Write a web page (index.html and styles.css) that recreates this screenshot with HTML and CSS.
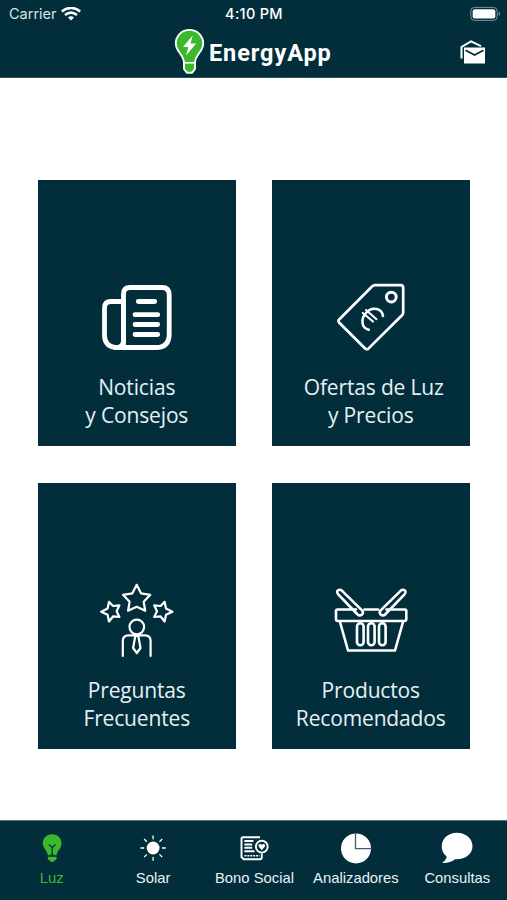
FILE: index.html
```html
<!DOCTYPE html>
<html lang="es">
<head>
<meta charset="utf-8">
<meta name="viewport" content="width=device-width, initial-scale=1">
<title>EnergyApp</title>
<link rel="stylesheet" href="styles.css">
</head>
<body>
<div class="app">
  <header class="header">
    <div class="status">
      <div class="carrier"><span class="carrier-name">Carrier</span>
        <svg class="wifi" width="20" height="14" viewBox="61 6 20 14" fill="none" stroke="#fff" stroke-width="2.6"><path d="M61.8 10.6Q71 3.2 80.2 10.6"/><path d="M65 14Q71 9.4 77 14"/><path d="M68 16.4Q71 14 74 16.4L71 19.6Z" fill="#fff" stroke="none"/></svg>
      </div>
      <span class="time">4:10 PM</span>
      <svg class="battery" width="32" height="16" viewBox="470 5 32 16"><rect x="470.8" y="6.4" width="26.4" height="13" rx="3.8" fill="none" stroke="#7d929c" stroke-width="1"/><rect x="472.7" y="8.3" width="22.6" height="9.2" rx="2" fill="#fff"/><path d="M498.7 10.8Q501.6 12.9 498.7 15Z" fill="#7d929c"/></svg>
    </div>
    <div class="titlebar">
      <div class="brand">
        <svg class="logo" width="32" height="48" viewBox="173 28 32 48"><path d="M189.5 29.9C181.7 29.9 175.8 35.9 175.8 43.4C175.8 52 184 54.5 184 63V69L187 72.8H192L195 69V63C195 54.5 203.2 52 203.2 43.4C203.2 35.9 197.3 29.9 189.5 29.9Z" fill="#3db82c" stroke="#fff" stroke-width="1.9" stroke-linejoin="round"/><path d="M184 62.8H195" stroke="#fff" stroke-width="1.6"/><path d="M192.7 35.5L183 47H188.4L186 55.5L196.2 43.5H190.5Z" fill="#fff"/></svg>
        <h1 class="name">EnergyApp</h1>
      </div>
      <svg class="mail" width="28" height="26" viewBox="459 39 28 26"><path d="M461.5 58.5V47L471 41.3L481 46.2" fill="none" stroke="#fff" stroke-width="2"/><path d="M464 47.5H485V63.5H464Z" fill="#fff"/><path d="M465.5 50.3L474.6 55L483.5 50.3" fill="none" stroke="#022e3c" stroke-width="1.8"/></svg>
    </div>
  </header>

  <main class="grid">
    <a class="tile">
      <svg class="art" viewBox="97 277 80 80" stroke-width="4.8"><path d="M123.5 346V294Q123.5 287.5 130 287.5H162Q169.2 287.5 169.2 295V334Q169.2 347.5 156 347.5H115Q104.5 346 104.5 335V308Q104.5 301.5 111 301.5H122"/><path d="M123.5 301V340Q123.5 346 118 347.5"/><path d="M138.3 301.5H154.7M135 314.7H157.7M135 324.5H157.7M135 334.5H157.7"/></svg>
      <span>Noticias<br>y Consejos</span>
    </a>
    <a class="tile">
      <svg class="art" viewBox="331 277 80 80" stroke-width="2.7"><path d="M374.5 285.2H400.5Q403.2 285.2 403.2 288V312.5Q403.2 314 402 315.3L368.6 348.4Q366.7 350.2 364.9 348.3L339.3 322.7Q337.6 320.9 339.4 319.2L372.5 286Z"/><circle cx="391.3" cy="297.1" r="4.9" stroke-width="2.9"/><path d="M383 316C382 308.5 372.5 306 366.5 312.3C360.5 318.5 361 327.5 368.8 329.8" stroke-width="2.5"/><path d="M366 310L376.5 319.2M362.8 313L373 321.6" stroke-width="2"/></svg>
      <span class="indent">Ofertas de Luz</span>
      <span>y Precios</span>
    </a>
    <a class="tile">
      <svg class="art" viewBox="97 580 80 80" stroke-width="2.2"><path d="M136.7 584.8L141 593.3L150.3 594.8L143.7 601.7L145.2 610.8L136.7 606.8L128.1 610.8L129.6 601.7L123 594.8L132.4 593.3Z"/><path d="M109 601.8L113 606L119.4 605.3L116.6 611.2L119.4 617L113.2 616.3L109 621.5L107.6 614.8L101.2 611.7L107.6 608.4Z"/><path d="M164.6 601.8L160.6 606L154.2 605.3L157 611.2L154.2 617L160.4 616.3L164.6 621.5L166 614.8L172.4 611.7L166 608.4Z"/><circle cx="136.8" cy="627" r="7.3"/><path d="M122.8 656V641Q122.8 635.3 128.5 635.3H145Q150.6 635.3 150.6 641V656"/><path d="M135.3 636H138.3L140.5 648L136.8 653L133.1 648Z"/></svg>
      <span>Preguntas<br>Frecuentes</span>
    </a>
    <a class="tile">
      <svg class="art" viewBox="331 580 80 80" stroke-width="2.6"><path d="M356 609.5H337.5Q336 609.5 336 611V619Q336 621 338 621H404.3Q406.3 621 406.3 619V611Q406.3 609.5 404.8 609.5H386.5M364.5 609.5H378"/><path d="M340 622L348 650.5H395L403 622"/><path d="M337.7 593.5Q336 590.3 339.5 589.8Q340.7 589.7 341.6 590.4L362.3 610.6Q363.8 612.7 362 614.5Q359.7 616.3 357.6 614.5L338.2 594.3"/><path d="M405 593.5Q406.7 590.3 403.2 589.8Q402 589.7 401.1 590.4L380.4 610.6Q378.9 612.7 380.7 614.5Q383 616.3 385.1 614.5L404.5 594.3"/><rect x="357" y="623.2" width="6.6" height="22" rx="3.3"/><rect x="368" y="623.2" width="6.6" height="22" rx="3.3"/><rect x="379" y="623.2" width="6.6" height="22" rx="3.3"/></svg>
      <span>Productos<br>Recomendados</span>
    </a>
  </main>

  <nav class="tabs">
    <a class="tab active">
      <svg width="34" height="34" viewBox="34.5 831 34 34"><path d="M51.7 834.2C46 834.2 42.3 838.3 42.3 843.2C42.3 848.5 47 850.5 47.3 855.3H56.1C56.4 850.5 61 848.5 61 843.2C61 838.3 57.3 834.2 51.7 834.2ZM47.3 856.7H56.1V859L52.5 862H50.9L47.3 859Z" fill="#3db82c"/><path d="M51.7 855V847.5L48.3 844.5M51.7 847.5L55 844.5M49.7 855H53.7" fill="none" stroke="#022e3c" stroke-width="1.2"/></svg>
      <span>Luz</span>
    </a>
    <a class="tab">
      <svg width="34" height="34" viewBox="136 831 34 34"><circle cx="153.1" cy="848" r="6.4" fill="#fff"/><path d="M153.1 835.5V839.2M153.1 857V860.7M140.4 848H144.2M162 848H165.8M144.1 839L146.8 841.7M159.5 854.4L162.2 857.1M144.1 857.1L146.8 854.4M159.5 841.7L162.2 839" stroke="#fff" stroke-width="1.3"/></svg>
      <span>Solar</span>
    </a>
    <a class="tab">
      <svg width="34" height="34" viewBox="237.5 831 34 34" fill="none" stroke="#fff"><path d="M260.5 837.3H243.5Q242 837.3 242 839V857L244.2 859.2H260.5Q262.3 859.2 262.3 857V853.5" stroke-width="1.9"/><path d="M244.9 841H254M244.9 844.4H252.7M244.9 847.8H252.7M244.9 851.2H255" stroke-width="2"/><path d="M245 855.8H260" stroke-width="1.6" stroke-dasharray="2 .9"/><circle cx="262.3" cy="846.7" r="5.9" stroke-width="1.9"/><path d="M262.3 850.2L258.9 846.3Q258.8 843.7 261 843.9L262.3 844.8L263.6 843.9Q265.8 843.7 265.7 846.3Z" fill="#fff" stroke="none"/></svg>
      <span>Bono Social</span>
    </a>
    <a class="tab">
      <svg width="34" height="34" viewBox="339 831 34 34"><circle cx="356" cy="848.4" r="15" fill="#fff"/><path d="M355.5 833V848.6H371.5" fill="none" stroke="#40606b" stroke-width="1.3"/></svg>
      <span>Analizadores</span>
    </a>
    <a class="tab">
      <svg width="34" height="34" viewBox="440.5 831 34 34"><path d="M457.5 832.8C466 832.8 473 838.5 473 846.3C473 854.5 465 860 455.5 859.2C452 862 447.5 863.3 442.6 862.9C445.3 861 446.8 859 447.2 856.4C444 854 442.2 850.6 442.2 846.5C442.2 838.5 449 832.8 457.5 832.8Z" fill="#fff"/></svg>
      <span>Consultas</span>
    </a>
  </nav>
</div>
</body>
</html>
```
FILE: styles.css
```css
* { box-sizing: border-box; }
body { margin: 0; background: #fff; }
svg { display: block; flex: none; }
.app {
  display: flex;
  flex-direction: column;
  width: 507px;
  height: 900px;
  overflow: hidden;
}
.header {
  height: 78px;
  background: #022e3c;
  border-bottom: 1px solid #294e5a;
  color: #fff;
}
.status {
  display: grid;
  grid-template-columns: 1fr auto 1fr;
  align-items: center;
  height: 27px;
  padding: 0 7px 0 9px;
  font: 14.5px/27px Inter, sans-serif;
}
.carrier { display: flex; align-items: center; gap: 4px; }
.carrier-name { color: #d9e2e6; }
.time { font-weight: 500; letter-spacing: .3px; margin-right: 1px; }
.battery { justify-self: end; margin-right: -2px; }
.titlebar {
  display: flex;
  align-items: center;
  justify-content: space-between;
  height: 50px;
  padding: 0 20px 0 173px;
}
.brand { display: flex; align-items: center; gap: 4px; }
.name {
  margin: 0;
  padding-top: 2px;
  font: 700 23.5px/46px Roboto, sans-serif;
  letter-spacing: .9px;
}
.grid {
  flex: 1;
  display: grid;
  grid-template-columns: 198px 198px;
  grid-auto-rows: 266px;
  gap: 37px 36px;
  justify-content: center;
  padding: 101.5px 0 0 .5px;
}
.tile {
  display: flex;
  flex-direction: column;
  align-items: center;
  justify-content: flex-end;
  padding-bottom: 17px;
  background: #022e3c;
  color: #e6f0f4;
  font: 21px/28px "Open Sans", sans-serif;
  letter-spacing: -.15px;
  text-align: center;
}
.indent { padding-left: 6px; }
.art {
  width: 80px;
  height: 80px;
  margin-bottom: 15.5px;
  fill: none;
  stroke: #fff;
  stroke-linecap: round;
  stroke-linejoin: round;
}
.tabs {
  display: grid;
  grid-template-columns: repeat(5, 1fr);
  height: 80px;
  padding: 10px 0 0 1px;
  margin-right: -1px;
  background: #022e3c;
  border-top: 1px solid #55757f;
}
.tab {
  display: flex;
  flex-direction: column;
  align-items: center;
  gap: 3px;
  color: #e9f1f4;
  font: 14.8px/20px "Liberation Sans", sans-serif;
  white-space: nowrap;
}
.active { color: #3db82c; }
```
